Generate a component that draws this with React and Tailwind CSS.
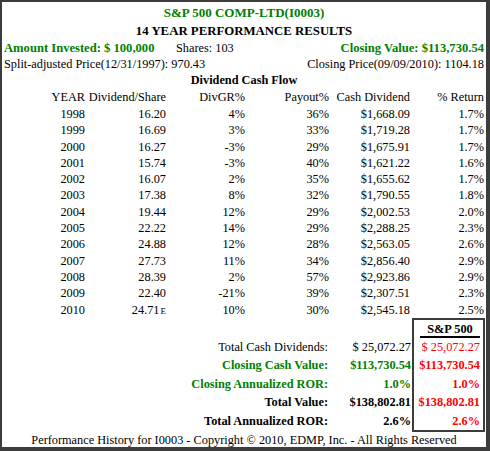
import React from "react";

const rows = [
  ["1998", "16.20", "4%", "36%", "$1,668.09", "1.7%"],
  ["1999", "16.69", "3%", "33%", "$1,719.28", "1.7%"],
  ["2000", "16.27", "-3%", "29%", "$1,675.91", "1.7%"],
  ["2001", "15.74", "-3%", "40%", "$1,621.22", "1.6%"],
  ["2002", "16.07", "2%", "35%", "$1,655.62", "1.7%"],
  ["2003", "17.38", "8%", "32%", "$1,790.55", "1.8%"],
  ["2004", "19.44", "12%", "29%", "$2,002.53", "2.0%"],
  ["2005", "22.22", "14%", "29%", "$2,288.25", "2.3%"],
  ["2006", "24.88", "12%", "28%", "$2,563.05", "2.6%"],
  ["2007", "27.73", "11%", "34%", "$2,856.40", "2.9%"],
  ["2008", "28.39", "2%", "57%", "$2,923.86", "2.9%"],
  ["2009", "22.40", "-21%", "39%", "$2,307.51", "2.3%"],
  ["2010", "24.71", "10%", "30%", "$2,545.18", "2.5%"],
];

const totals = [
  { label: "Total Cash Dividends:", value: "$ 25,072.27", box: "$ 25,072.27", cls: "text-black", bold: false },
  { label: "Closing Cash Value:", value: "$113,730.54", box: "$113,730.54", cls: "text-[#008000]", bold: true },
  { label: "Closing Annualized ROR:", value: "1.0%", box: "1.0%", cls: "text-[#008000]", bold: true },
  { label: "Total Value:", value: "$138,802.81", box: "$138,802.81", cls: "text-black", bold: true },
  { label: "Total Annualized ROR:", value: "2.6%", box: "2.6%", cls: "text-black", bold: true },
];

const grid = "grid grid-cols-[83px_81px_79px_84px_81px_74px]";

export default function App() {
  return (
    <div
      className="w-[490px] h-[451px] bg-white border-l-2 border-t-2 border-r-4 border-b-4 border-[#3c3c3c] flex flex-col text-[12.3px] leading-none text-black"
      style={{ fontFamily: '"Liberation Serif", "Times New Roman", serif' }}
    >
      <div className="h-[20px] flex items-center justify-center font-bold text-[13px] text-[#008000]">
        S&amp;P 500 COMP-LTD(I0003)
      </div>
      <div className="h-[18px] flex items-center justify-center font-bold text-[12.8px]">
        14 YEAR PERFORMANCE RESULTS
      </div>
      <div className="h-[17px] flex items-center pl-[2px] pr-[2px]">
        <span className="w-[172px] font-bold text-[12.6px] text-[#008000]">Amount Invested: $ 100,000</span>
        <span>Shares: 103</span>
        <span className="ml-auto font-bold text-[12.6px] text-[#008000]">Closing Value: $113,730.54</span>
      </div>
      <div className="h-[15px] flex items-center pl-[2px] pr-[2px]">
        <span>Split-adjusted Price(12/31/1997): 970.43</span>
        <span className="ml-auto">Closing Price(09/09/2010): 1104.18</span>
      </div>
      <div className="h-[17px] flex items-center justify-center font-bold">Dividend Cash Flow</div>
      <div className={`${grid} h-[17px] items-center text-right`}>
        <span>YEAR</span>
        <span>Dividend/Share</span>
        <span>DivGR%</span>
        <span>Payout%</span>
        <span>Cash Dividend</span>
        <span>% Return</span>
      </div>
      {rows.map((r, i) => (
        <div key={r[0]} className={`${grid} h-[16.3px] items-center text-right`}>
          <span>{r[0]}</span>
          <span>
            {r[1]}
            {i === rows.length - 1 && <span className="text-[9px] ml-[1px]">E</span>}
          </span>
          <span>{r[2]}</span>
          <span>{r[3]}</span>
          <span>{r[4]}</span>
          <span>{r[5]}</span>
        </div>
      ))}
      <div className="flex">
        <div className="w-[410px] flex flex-col">
          <div className="h-[20px]" />
          {totals.map((t) => (
            <div key={t.label} className={`h-[18.5px] flex items-center ${t.cls} ${t.bold ? "font-bold" : ""}`}>
              <span className="w-[326px] text-right">{t.label}</span>
              <span className="w-[83px] text-right">{t.value}</span>
            </div>
          ))}
        </div>
        <div className="w-[73px] border-2 border-[#3c3c3c] flex flex-col">
          <div className="h-[18px] flex items-end justify-center">
            <span className="w-[60px] ml-[3px] text-center font-bold border-b-2 border-black pb-[1px]">S&amp;P 500</span>
          </div>
          {totals.map((t) => (
            <div key={t.label} className={`h-[18.5px] flex items-center justify-end pr-[3px] text-[#ff0000] ${t.bold ? "font-bold" : ""}`}>
              {t.box}
            </div>
          ))}
        </div>
      </div>
      <div className="flex-1 flex items-center justify-center">
        Performance History for I0003 - Copyright © 2010, EDMP, Inc. - All Rights Reserved
      </div>
    </div>
  );
}
